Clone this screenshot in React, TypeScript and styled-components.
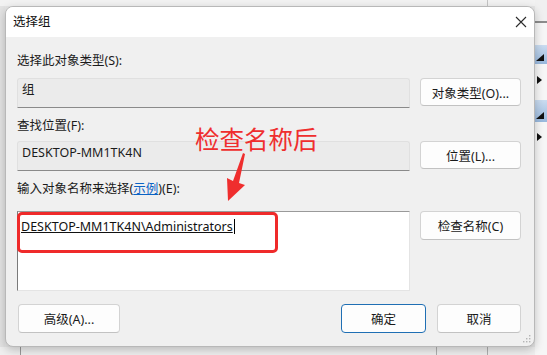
import React from "react";
import styled, { createGlobalStyle } from "styled-components";

const Global = createGlobalStyle`
  html, body { margin: 0; padding: 0; }
  body {
    background: #ececec;
    font-family: "Noto Sans", "Noto Sans CJK SC", sans-serif;
    font-size: 12.5px;
    color: #1b1b1b;
  }
`;

const Page = styled.div`
  position: relative;
  width: 547px;
  height: 355px;
  overflow: hidden;
  display: grid;
  grid-template-columns: 5px 530px 12px;
  grid-template-rows: 6px 341px 8px;
  background: #e6e6e6;
`;

const TopStrip = styled.div`
  grid-column: 1 / 3;
  grid-row: 1;
  background: linear-gradient(to right, transparent 487px, #c4c4c4 487px, #c4c4c4 488px, transparent 488px), #f2f2f2;
`;

const LeftStrip = styled.div`
  grid-column: 1;
  grid-row: 2;
  background: #e3e3e3;
`;

const BottomStrip = styled.div`
  grid-column: 1 / 3;
  grid-row: 3;
  background:
    linear-gradient(to right, transparent 20px, #9a9a9a 20px, #9a9a9a 21px, transparent 21px),
    linear-gradient(to right, transparent 436px, #b0b0b0 436px, #b0b0b0 437px, transparent 437px),
    linear-gradient(to right, transparent 487px, #b0b0b0 487px, #b0b0b0 488px, transparent 488px),
    #efefef;
`;

const RightStrip = styled.div`
  grid-column: 3;
  grid-row: 1 / 4;
  display: flex;
  flex-direction: column;
  background: #f6f6f6;
`;

const StripTop = styled.div`
  height: 21px;
  background: #f0f0f0;
`;

const StripLine = styled.div`
  height: 2px;
  background: #8c8c8c;
`;

const BlueBand = styled.div<{ $top: number; $h: number }>`
  margin-top: ${(p) => p.$top}px;
  height: ${(p) => p.$h}px;
  background: linear-gradient(#cadcf0, #98b8dd);
  display: flex;
  align-items: flex-end;
  padding-left: 1px;
  padding-bottom: 3px;
  box-sizing: border-box;
`;

const StripRow = styled.div<{ $h: number }>`
  height: ${(p) => p.$h}px;
  display: flex;
  align-items: center;
  padding-left: 2px;
`;

const Dialog = styled.div`
  grid-column: 2;
  grid-row: 2;
  position: relative;
  z-index: 1;
  display: flex;
  flex-direction: column;
  background: #f0f0f0;
  border: 1px solid #b8b8b8;
  border-radius: 8px;
  box-shadow: 0 3px 10px rgba(0, 0, 0, 0.22);
  overflow: hidden;
`;

const TitleBar = styled.div`
  height: 30px;
  flex: none;
  background: #ffffff;
  display: flex;
  align-items: center;
  justify-content: space-between;
  padding: 0 6px 0 7px;
`;

const Title = styled.span`
  color: #111;
  line-height: 16px;
`;

const CloseBtn = styled.div`
  width: 14px;
  height: 14px;
  display: flex;
  align-items: center;
  justify-content: center;
`;

const Content = styled.div`
  display: flex;
  flex-direction: column;
  padding: 16px 13px 0 11px;
`;

const Label = styled.div<{ $mt: number; $mb: number }>`
  line-height: 16px;
  height: 16px;
  margin-top: ${(p) => p.$mt}px;
  margin-bottom: ${(p) => p.$mb}px;
  white-space: nowrap;
`;

const Link = styled.span`
  color: #0b63c4;
  text-decoration: underline;
`;

const Row = styled.div`
  display: grid;
  grid-template-columns: 393px 101px;
  column-gap: 10px;
  align-items: start;
`;

const ReadField = styled.div`
  height: 30px;
  box-sizing: border-box;
  background: #ebebeb;
  border: 1px solid #e0e0e0;
  border-bottom: 1px solid #8a8a8a;
  border-radius: 3px 3px 0 0;
  padding: 3px 4px;
  line-height: 16px;
  white-space: nowrap;
`;

const TextArea = styled.div`
  position: relative;
  height: 80px;
  box-sizing: border-box;
  background: #ffffff;
  border-top: 1px solid #9a9a9a;
  border-left: 1px solid #7a7a7a;
  border-right: 1px solid #e4e4e4;
  border-bottom: 1px solid #e4e4e4;
  padding: 7px 3px;
  line-height: 16px;
  white-space: nowrap;
`;

const Resolved = styled.span`
  text-decoration: underline;
  color: #111;
`;

const Caret = styled.span`
  display: inline-block;
  width: 1px;
  height: 15px;
  background: #000;
  vertical-align: -3px;
  margin-left: 1px;
`;

const Button = styled.div<{ $w?: number; $primary?: boolean; $h?: number }>`
  width: ${(p) => (p.$w ? `${p.$w}px` : "auto")};
  height: ${(p) => p.$h ?? 29}px;
  box-sizing: border-box;
  background: #fdfdfd;
  border: 1px solid ${(p) => (p.$primary ? "#1f6fb4" : "#d3d3d3")};
  border-bottom-color: ${(p) => (p.$primary ? "#1f6fb4" : "#c2c2c2")};
  border-radius: 4px;
  display: flex;
  align-items: center;
  justify-content: center;
  color: #1a1a1a;
  white-space: nowrap;
`;

const Footer = styled.div`
  display: flex;
  align-items: center;
  margin-top: 13px;
  padding-left: 1px;
`;

const FooterRight = styled.div`
  margin-left: auto;
  display: flex;
  gap: 11px;
`;

const Grip = styled.svg`
  position: absolute;
  right: 3px;
  bottom: 3px;
`;

const RedBox = styled.div`
  position: absolute;
  left: 17px;
  top: 212px;
  width: 261px;
  height: 41px;
  box-sizing: border-box;
  border: 3px solid #ef2a2a;
  border-radius: 5px;
  z-index: 2;
  pointer-events: none;
`;

const Annotation = styled.div`
  position: absolute;
  left: 195px;
  top: 124px;
  font-family: "Noto Sans CJK SC", sans-serif;
  font-size: 24.5px;
  line-height: 30px;
  color: #ef2e2e;
  z-index: 2;
  white-space: nowrap;
`;

const Arrow = styled.svg`
  position: absolute;
  left: 220px;
  top: 150px;
  z-index: 2;
`;

export default function App() {
  return (
    <>
      <Global />
      <Page>
        <TopStrip />
        <LeftStrip />
        <Dialog>
          <TitleBar>
            <Title>选择组</Title>
            <CloseBtn>
              <svg width="12" height="12" viewBox="0 0 12 12">
                <path d="M1 1 L11 11 M11 1 L1 11" stroke="#2b2b2b" strokeWidth="1.1" fill="none" />
              </svg>
            </CloseBtn>
          </TitleBar>
          <Content>
            <Label $mt={0} $mb={9}>选择此对象类型(S):</Label>
            <Row>
              <ReadField>组</ReadField>
              <Button $h={28}>对象类型(O)...</Button>
            </Row>
            <Label $mt={10} $mb={7}>查找位置(F):</Label>
            <Row>
              <ReadField>DESKTOP-MM1TK4N</ReadField>
              <Button $h={28}>位置(L)...</Button>
            </Row>
            <Label $mt={10} $mb={14}>
              输入对象名称来选择(<Link>示例</Link>)(E):
            </Label>
            <Row>
              <TextArea>
                <Resolved>DESKTOP-MM1TK4N\Administrators</Resolved>
                <Caret />
              </TextArea>
              <Button $h={29}>检查名称(C)</Button>
            </Row>
            <Footer>
              <Button $w={102}>高级(A)...</Button>
              <FooterRight>
                <Button $w={85} $primary>确定</Button>
                <Button $w={84}>取消</Button>
              </FooterRight>
            </Footer>
          </Content>
          <Grip width="8" height="8" viewBox="0 0 8 8">
            <rect x="6" y="0" width="1.4" height="1.4" fill="#b5b5b5" />
            <rect x="3" y="3" width="1.4" height="1.4" fill="#b5b5b5" />
            <rect x="6" y="3" width="1.4" height="1.4" fill="#b5b5b5" />
            <rect x="0" y="6" width="1.4" height="1.4" fill="#b5b5b5" />
            <rect x="3" y="6" width="1.4" height="1.4" fill="#b5b5b5" />
            <rect x="6" y="6" width="1.4" height="1.4" fill="#b5b5b5" />
          </Grip>
        </Dialog>
        <RightStrip>
          <StripTop />
          <StripLine />
          <BlueBand $top={22} $h={19}>
            <svg width="8" height="7" viewBox="0 0 8 7">
              <polygon points="0,7 8,0 8,7" fill="#111" />
            </svg>
          </BlueBand>
          <StripRow $h={32}>
            <svg width="5" height="8" viewBox="0 0 5 8">
              <polygon points="0,0 5,4 0,8" fill="#111" />
            </svg>
          </StripRow>
          <BlueBand $top={4} $h={22}>
            <svg width="8" height="7" viewBox="0 0 8 7">
              <polygon points="0,7 8,0 8,7" fill="#111" />
            </svg>
          </BlueBand>
          <StripRow $h={30}>
            <svg width="5" height="8" viewBox="0 0 5 8">
              <polygon points="0,0 5,4 0,8" fill="#111" />
            </svg>
          </StripRow>
        </RightStrip>
        <BottomStrip />
        <Annotation>检查名称后</Annotation>
        <Arrow width="30" height="54" viewBox="0 0 30 54">
          <polygon points="23,3 25,4 19,33 25,35 8,51 7,28 13,31" fill="#ef2e2e" />
        </Arrow>
        <RedBox />
      </Page>
    </>
  );
}
